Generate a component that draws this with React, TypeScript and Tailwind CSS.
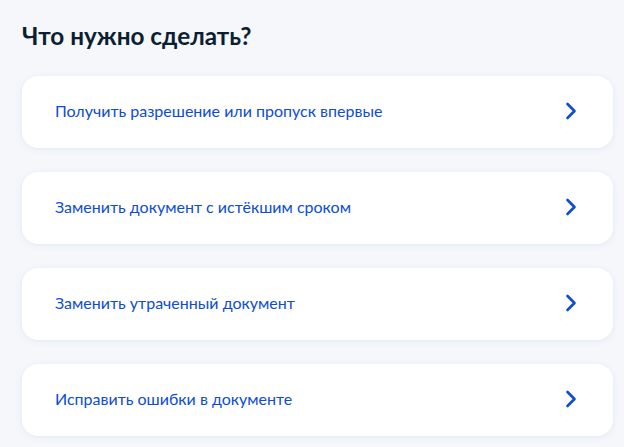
import React from "react";

const items = [
  "Получить разрешение или пропуск впервые",
  "Заменить документ с истёкшим сроком",
  "Заменить утраченный документ",
  "Исправить ошибки в документе",
];

function Chevron() {
  return (
    <svg width="12" height="18" viewBox="0 0 12 18" fill="none">
      <path
        d="M2.5 2L9.5 9L2.5 16"
        stroke="#0d4cd3"
        strokeWidth="2.6"
        strokeLinecap="round"
        strokeLinejoin="round"
      />
    </svg>
  );
}

export default function App() {
  return (
    <div
      className="min-h-[447px] w-[624px] bg-[#f5f7fb] pl-[22px] pr-[11px] pt-[22px]"
      style={{ fontFamily: "Lato, 'Noto Sans', sans-serif" }}
    >
      <h1 className="text-[24.3px] font-bold leading-[28px] text-[#0b1f33]">
        Что нужно сделать?
      </h1>
      <div className="mt-[26px] flex flex-col gap-[24px]">
        {items.map((t) => (
          <button
            key={t}
            className="flex h-[72px] w-full items-center justify-between rounded-[16px] bg-white pb-[2px] pl-[33px] pr-[36px] text-left shadow-[0_1px_6px_rgba(70,100,170,0.10)]"
          >
            <span className="text-[16px] leading-[24px] text-[#0d4cd3]">{t}</span>
            <Chevron />
          </button>
        ))}
      </div>
    </div>
  );
}
